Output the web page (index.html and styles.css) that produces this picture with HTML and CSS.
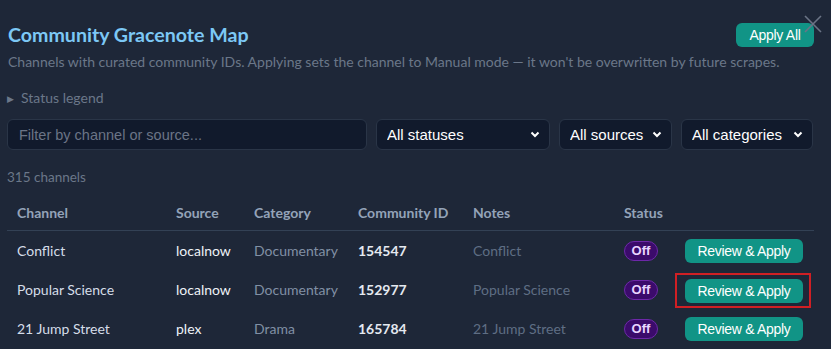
FILE: index.html
```html
<!DOCTYPE html>
<html lang="en">
<head>
    <meta charset="UTF-8">
    <meta name="viewport" content="width=device-width, initial-scale=1.0">
    <title>Community Gracenote Map</title>
    <link rel="stylesheet" href="styles.css">
</head>
<body>
    <div class="modal">
        <button class="close-btn" aria-label="Close">
            <svg width="20" height="20" viewBox="0 0 20 20"><path d="M2 2 L18 18 M18 2 L2 18" stroke="currentColor" stroke-width="1.6" fill="none"/></svg>
        </button>

        <div class="modal-head">
            <h1>Community Gracenote Map</h1>
            <button class="btn-teal btn-apply-all">Apply All</button>
        </div>
        <p class="subtitle">Channels with curated community IDs. Applying sets the channel to Manual mode — it won't be overwritten by future scrapes.</p>

        <details class="legend">
            <summary><span class="caret">&#9654;</span>Status legend</summary>
        </details>

        <div class="filters">
            <input class="filter-input" type="text" placeholder="Filter by channel or source...">
            <div class="select-wrap w-status">
                <select><option>All statuses</option></select>
                <svg class="chev" width="10" height="7" viewBox="0 0 10 7"><path d="M1.5 1.5 L5 5 L8.5 1.5" stroke="#fff" stroke-width="2" fill="none"/></svg>
            </div>
            <div class="select-wrap w-source">
                <select><option>All sources</option></select>
                <svg class="chev" width="10" height="7" viewBox="0 0 10 7"><path d="M1.5 1.5 L5 5 L8.5 1.5" stroke="#fff" stroke-width="2" fill="none"/></svg>
            </div>
            <div class="select-wrap w-category">
                <select><option>All categories</option></select>
                <svg class="chev" width="10" height="7" viewBox="0 0 10 7"><path d="M1.5 1.5 L5 5 L8.5 1.5" stroke="#fff" stroke-width="2" fill="none"/></svg>
            </div>
        </div>

        <div class="count">315 channels</div>

        <table class="map-table">
            <thead>
                <tr>
                    <th class="c-channel">Channel</th>
                    <th class="c-source">Source</th>
                    <th class="c-category">Category</th>
                    <th class="c-id">Community ID</th>
                    <th class="c-notes">Notes</th>
                    <th class="c-status">Status</th>
                    <th class="c-action"></th>
                </tr>
            </thead>
            <tbody>
                <tr>
                    <td class="t-channel">Conflict</td>
                    <td class="t-source">localnow</td>
                    <td class="t-category">Documentary</td>
                    <td class="t-id">154547</td>
                    <td class="t-notes">Conflict</td>
                    <td><span class="badge-off">Off</span></td>
                    <td class="t-action"><div class="action"><button class="btn-teal btn-review">Review &amp; Apply</button></div></td>
                </tr>
                <tr>
                    <td class="t-channel">Popular Science</td>
                    <td class="t-source">localnow</td>
                    <td class="t-category">Documentary</td>
                    <td class="t-id">152977</td>
                    <td class="t-notes">Popular Science</td>
                    <td><span class="badge-off">Off</span></td>
                    <td class="t-action"><div class="action highlighted"><button class="btn-teal btn-review">Review &amp; Apply</button></div></td>
                </tr>
                <tr>
                    <td class="t-channel">21 Jump Street</td>
                    <td class="t-source">plex</td>
                    <td class="t-category">Drama</td>
                    <td class="t-id">165784</td>
                    <td class="t-notes">21 Jump Street</td>
                    <td><span class="badge-off">Off</span></td>
                    <td class="t-action"><div class="action"><button class="btn-teal btn-review">Review &amp; Apply</button></div></td>
                </tr>
            </tbody>
        </table>
    </div>
</body>
</html>
```

FILE: styles.css
```css
body {
    margin: 0;
    padding: 0;
    background-color: #1e2738;
    font-family: Lato, "Liberation Sans", sans-serif;
    color: #d5dde8;
    overflow: hidden;
}
.modal {
    position: relative;
    padding: 23px 17px 0 7px;
}
.close-btn {
    position: absolute;
    top: 14px;
    right: 8px;
    background: none;
    border: none;
    padding: 0;
    color: #6b7486;
    cursor: pointer;
}
.modal-head {
    display: flex;
    justify-content: space-between;
    align-items: center;
}
.modal-head h1 {
    margin: 0 0 0 1px;
    font-size: 19.6px;
    line-height: 24px;
    font-weight: 700;
    color: #7cc8f5;
}
.btn-teal {
    background-color: #119486;
    color: #fff;
    border: none;
    border-radius: 6px;
    font-family: "Liberation Sans", Arial, sans-serif;
    font-size: 14px;
    cursor: pointer;
}
.btn-apply-all {
    height: 24px;
    width: 78px;
    padding: 0;
    letter-spacing: -0.3px;
}
.subtitle {
    margin: 6px 0 0 1px;
    font-size: 14px;
    line-height: 18px;
    color: #6b7789;
}
.legend {
    margin-top: 18px;
}
.legend summary {
    list-style: none;
    font-size: 14px;
    line-height: 18px;
    color: #6b7789;
    cursor: pointer;
}
.legend summary::-webkit-details-marker {
    display: none;
}
.legend .caret {
    display: inline-block;
    font-size: 9px;
    width: 14px;
    vertical-align: 1px;
}
.filters {
    display: flex;
    gap: 9px;
    margin-top: 11px;
}
.filter-input,
.select-wrap select {
    box-sizing: border-box;
    height: 31px;
    background-color: #111a2c;
    border: 1px solid #2a3547;
    border-radius: 6px;
    font-family: "Liberation Sans", Arial, sans-serif;
    font-size: 15px;
    color: #fff;
    outline: none;
}
.filter-input {
    width: 360px;
    padding: 0 11px;
    font-size: 14.5px;
}
.filter-input::placeholder {
    color: #6b7486;
}
.select-wrap {
    position: relative;
}
.select-wrap select {
    width: 100%;
    appearance: none;
    padding: 0 10px;
}
.select-wrap .chev {
    position: absolute;
    right: 10px;
    top: 12px;
    pointer-events: none;
}
.w-status { width: 174px; }
.w-source { width: 113px; }
.w-category { width: 132px; }
.count {
    margin-top: 18px;
    font-size: 13.5px;
    line-height: 18px;
    color: #6b7789;
}
.map-table {
    margin-top: 8px;
    width: 807px;
    border-collapse: collapse;
    table-layout: fixed;
    font-size: 14px;
}
.map-table th {
    height: 36px;
    padding: 0 0 0 10px;
    text-align: left;
    font-weight: 700;
    color: #94a3b8;
    border-bottom: 1px solid #334155;
}
.map-table td {
    height: 39px;
    padding: 0 0 0 10px;
}
.map-table td.t-action {
    padding-left: 10px;
}
.c-channel { width: 149px; }
.c-source { width: 68px; }
.c-category { width: 94px; }
.c-id { width: 105px; }
.c-notes { width: 141px; }
.c-status { width: 41px; }
.t-channel { color: #d5dde8; }
.t-source { color: #eef2f7; }
.t-category { color: #8190a5; }
.t-id { color: #e5e9f0; font-weight: 700; }
.t-notes { color: #5f6e84; }
.badge-off {
    display: inline-block;
    box-sizing: border-box;
    width: 34px;
    height: 20px;
    line-height: 18px;
    text-align: center;
    background-color: #3b0b6b;
    border: 1px solid #6d28a8;
    border-radius: 10px;
    font-family: "Liberation Sans", Arial, sans-serif;
    font-size: 13px;
    font-weight: 700;
    color: #e9d5ff;
}
.action {
    display: inline-flex;
    box-sizing: border-box;
    padding: 0 6px 0 8px;
    border: 2px solid transparent;
}
.action.highlighted {
    border-color: #d01f24;
    padding: 4px 6px 3px 8px;
    margin-top: 1px;
}
.btn-review {
    height: 24px;
    width: 118px;
    padding: 0;
    letter-spacing: -0.3px;
}
```
